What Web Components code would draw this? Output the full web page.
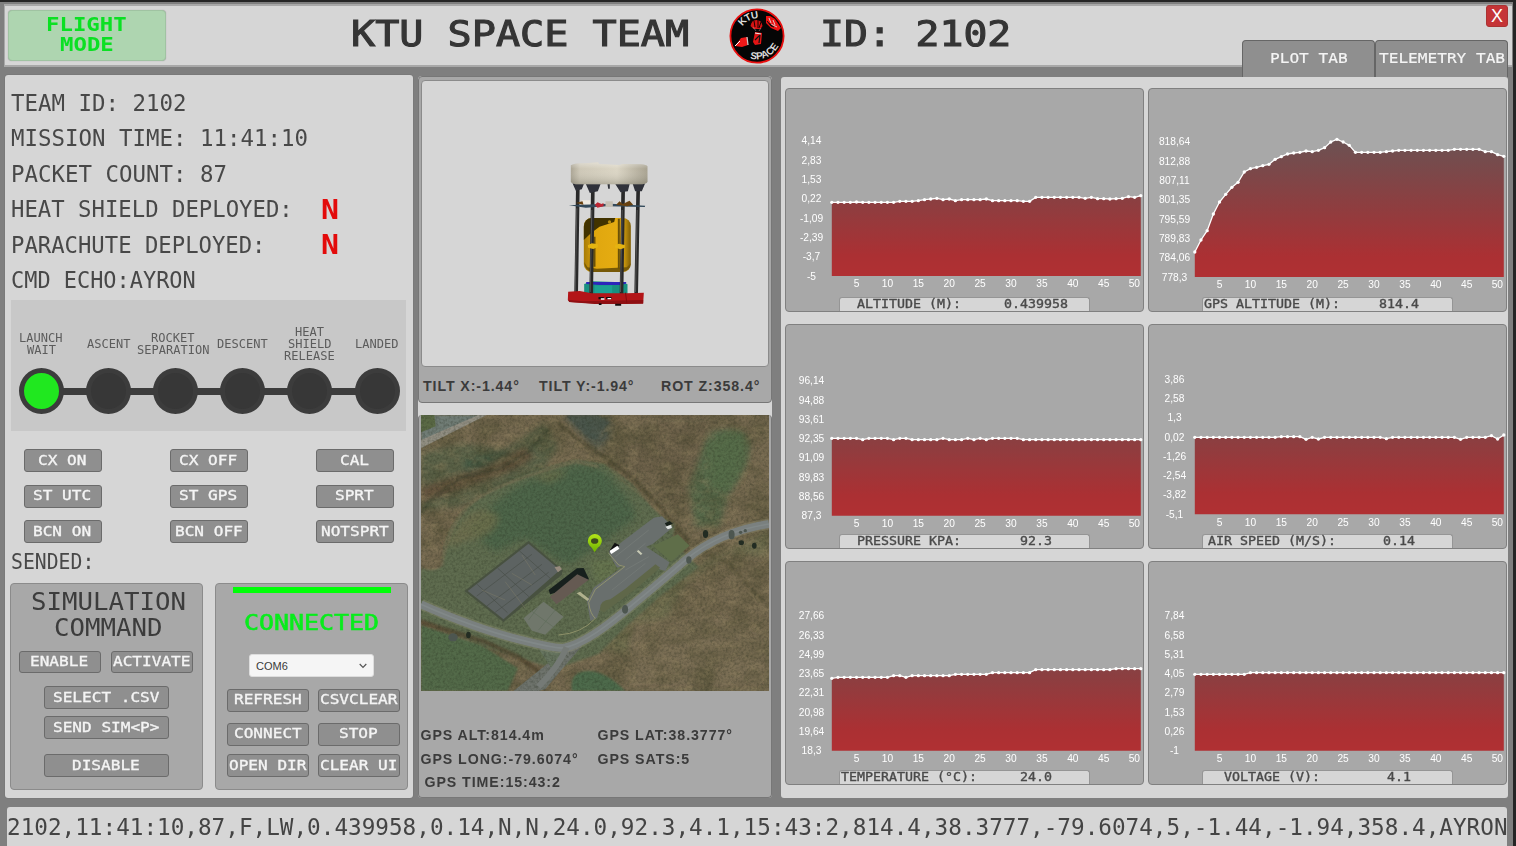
<!DOCTYPE html>
<html lang="en">
<head>
<meta charset="utf-8">
<title>Ground Station</title>
<style>
html,body{margin:0;height:100%;overflow:hidden;background:#7f7f7f}
</style>
</head>
<body>
<ground-station></ground-station>
<script>
const MONO = '"DejaVu Sans Mono","Liberation Mono",monospace';
const SANS = '"Liberation Sans",Arial,sans-serif';
function define(name, html, setup) {
  const t = document.createElement('template');
  t.innerHTML = html;
  customElements.define(name, class extends HTMLElement {
    connectedCallback() {
      if (this.shadowRoot) return;
      const root = this.attachShadow({mode: 'open'});
      root.append(t.content.cloneNode(true));
      if (setup) setup(this, root);
    }
  });
}

/* Terminal text: every character occupies a cell of width `adv` */
define('cell-text', `<style>
:host{display:block;flex:none;white-space:pre;overflow:visible}
span{display:block;width:max-content;transform-origin:0 50%;font-family:${MONO}}
</style><span><slot></slot></span>`, (el, root) => {
  const size = +el.getAttribute('size'), adv = +el.getAttribute('adv');
  el.style.width = el.textContent.length * adv + 'px';
  const s = root.querySelector('span');
  s.style.fontSize = size + 'px';
  s.style.lineHeight = (el.getAttribute('line') || Math.round(size * 1.2)) + 'px';
  s.style.transform = 'scaleX(' + adv / (size * 0.602) + ')';
});

define('cmd-button', `<style>
:host{display:flex;box-sizing:border-box;align-items:center;justify-content:center;height:23px;background:#8f8f8f;border:1px solid #6b6b6b;border-radius:3px;color:#f4f4f4;overflow:hidden}
div{margin:-2px 1px 0 0}
cell-text{-webkit-text-stroke:.35px #f4f4f4}
</style><div></div>`, (el, root) => {
  const c = document.createElement('cell-text');
  c.setAttribute('size', '14.6'); c.setAttribute('adv', '9.68');
  c.textContent = el.getAttribute('label');
  root.querySelector('div').append(c);
});

define('team-logo', `<style>:host{display:block;width:56px;height:56px}svg{display:block}text{font:bold 10px ${SANS};fill:#dcdcdc}</style>
<svg width="56" height="56" viewBox="0 0 56 56">
<defs><path id="a" d="M13.500 18.500A18 18 0 0 1 32 10.500"/><path id="b" d="M21 50.500A25 25 0 0 0 52.500 27"/></defs>
<circle cx="28" cy="28" r="26.6" fill="#050505" stroke="#e90f0f" stroke-width="1.8"/>
<text letter-spacing="-.8"><textPath href="#a">KTU</textPath></text>
<text letter-spacing="0"><textPath href="#b">SPACE</textPath></text>
<path d="M37 8l4 0 5 3 6 9-3 3-7-3-5-5z" fill="#ef1212"/><path d="M40 10l2 5m2-3l2 5m-4-1l6 3" stroke="#ddd" stroke-width=".9"/><path d="M38 13l4 5 3 1" stroke="#111"/>
<path d="M21.500 18q1-6 6-6 5 0 6 6l-2 3h-7z" fill="#d51313"/><path d="M25 13l1 6m3-7v8m3-6l-2 6" stroke="#190000" stroke-width="1"/>
<path d="M24 19l3 4m5-3l-2 3" stroke="#aaa" stroke-width=".5"/>
<path d="M26 24l7 1-1 11-6 1-2-3z" fill="#e41414"/><path d="M26 32l5-5-1 8" fill="none" stroke="#111" stroke-width="1.2"/><path d="M26 25l6 1" stroke="#eee"/>
<path d="M6 38l6-8 6-1 1 8-6 2z" fill="#f01818"/><path d="M6 38l5-5" stroke="#fff" stroke-width="1"/><path d="M18 29l1 8" stroke="#ccc" stroke-width="1.2"/>
</svg>`);

define('top-bar', `<style>
:host{display:flex;box-sizing:border-box;height:63px;border:solid #a8a8a8;border-width:2px 0 2px 1px;background:#d6d6d6;position:relative;color:#353535}
.mode{box-sizing:border-box;width:158px;height:51px;margin:4px 0 0 3px;padding:4px 1px 0 0;background:#aed5b0;border:1px solid #a0c3a2;border-radius:4px;display:flex;flex-direction:column;align-items:center;color:#0be023;font-weight:bold;box-shadow:0 0 1px #999}
.titles{display:flex;align-items:center;margin-left:185px;height:56px;-webkit-text-stroke:1.1px #353535}
team-logo{margin:3px 35.5px 0 39.5px;-webkit-text-stroke:0}
.x{position:absolute;box-sizing:border-box;right:4px;top:-1px;width:22px;height:22px;border-radius:3px;background:#c53437;border:1px solid #a33;color:#fff;font:18px/20px ${SANS};text-align:center}
.tabs{position:absolute;right:4px;top:34px;display:flex}
.tab{box-sizing:border-box;width:133px;height:37px;background:#8f8f8f;border:1px solid #666;border-bottom:0;border-radius:4px 4px 0 0;display:flex;justify-content:center;padding:8px 0 0 1px;color:#f4f4f4}
.tab cell-text{-webkit-text-stroke:.15px #fff}
</style>
<div class="mode"><cell-text size="19.5" adv="13.45" line="20">FLIGHT</cell-text><cell-text size="19.5" adv="13.45" line="20">MODE</cell-text></div>
<div class="titles"><cell-text size="35" adv="24.15">KTU SPACE TEAM</cell-text><team-logo></team-logo><cell-text size="35" adv="23.9">ID: 2102</cell-text></div>
<div class="x">X</div>
<div class="tabs"><div class="tab"><cell-text size="14.6" adv="9.7">PLOT TAB</cell-text></div><div class="tab"><cell-text size="14.6" adv="9.7">TELEMETRY TAB</cell-text></div></div>`);

define('info-line', `<style>:host{display:flex;align-items:center;height:35.5px;position:relative}b{position:absolute;left:310px;top:1px;color:#e30b0b}cell-text{padding-top:1px}</style>
<cell-text size="22.4" adv="13.5"></cell-text><b></b>`, (el, root) => {
  const c = document.createElement('cell-text');
  c.setAttribute('size', '22.4'); c.setAttribute('adv', el.getAttribute('adv') || '13.5');
  c.textContent = el.getAttribute('text');
  root.querySelector('cell-text').replaceWith(c);
  if (el.hasAttribute('flag')) {
    const n = document.createElement('cell-text');
    n.setAttribute('size', '26.5'); n.setAttribute('adv', '18');
    n.textContent = el.getAttribute('flag');
    root.querySelector('b').append(n);
  } else root.querySelector('b').remove();
});

define('phase-step', `<style>
:host{display:flex;flex-direction:column;width:67.2px;flex:none}
.l{height:46px;display:flex;flex-direction:column;align-items:center;justify-content:center;color:#5c5c5c;padding-top:1px;margin:0 2px 0 var(--pull,0);box-sizing:border-box}
.t{height:50px;display:flex;align-items:center;justify-content:center;background:linear-gradient(#3c3c3c,#3c3c3c) center/100% 7px no-repeat}
:host(:not([last])) .t{margin-right:-1px;padding-right:1px}
:host([first]) .t{background-position:100% 50%;background-size:50% 7px}
:host([last]) .t{background-position:0 50%;background-size:50% 7px}
.d{box-sizing:border-box;width:45px;height:46px;border-radius:50%;border:5.5px solid #3c3c3c;background:#373737}
:host([on]) .d{background:#20e81f}
</style><div class="l"></div><div class="t"><div class="d"></div></div>`, (el, root) => {
  for (const w of el.getAttribute('label').split('|')) {
    const c = document.createElement('cell-text');
    c.setAttribute('size', '11.6'); c.setAttribute('adv', '7.25'); c.setAttribute('line', '12');
    c.textContent = w;
    root.querySelector('.l').append(c);
  }
});

define('phase-track', `<style>:host{display:flex;box-sizing:border-box;width:395px;height:131px;padding:20px 0 0;background:#c8c8c8}div{display:flex;margin-left:-3.5px}phase-step{--pull:2px}.wide{--pull:-3px}</style>
<div><phase-step first on label="LAUNCH|WAIT"></phase-step><phase-step label="ASCENT"></phase-step><phase-step label="ROCKET|SEPARATION" class="wide"></phase-step><phase-step label="DESCENT"></phase-step><phase-step label="HEAT|SHIELD|RELEASE"></phase-step><phase-step last label="LANDED"></phase-step></div>`);

define('sim-panel', `<style>
:host{display:flex;flex-direction:column;align-items:center;box-sizing:border-box;width:193px;height:207px;background:#a8a8a8;border:1px solid #8b8b8b;border-radius:4px;color:#3c3c3c;padding-top:5px}
.r{display:flex;gap:10px;margin:10px 1px 13px 0}.r cmd-button{width:82px;height:22px}
.w{width:125px}
.h{margin-left:4px;display:flex;flex-direction:column;align-items:center}
</style><div class="h"><cell-text size="25" adv="15.5" line="26">SIMULATION</cell-text><cell-text size="25" adv="15.5" line="26">COMMAND</cell-text></div>
<div class="r"><cmd-button label="ENABLE"></cmd-button><cmd-button label="ACTIVATE"></cmd-button></div>
<cmd-button class="w" label="SELECT .CSV"></cmd-button>
<cmd-button class="w" style="margin:7px 0 15px" label="SEND SIM&lt;P&gt;"></cmd-button>
<cmd-button class="w" label="DISABLE"></cmd-button>`);

define('port-panel', `<style>
:host{display:flex;flex-direction:column;align-items:center;box-sizing:border-box;width:193px;height:207px;background:#a8a8a8;border:1px solid #8b8b8b;border-radius:4px}
.bar{width:158px;height:6px;background:#00ff08;margin-top:3px}
.c{color:#08ec1c;margin-top:16px;-webkit-text-stroke:.6px #08ec1c}
.s{box-sizing:border-box;width:125px;height:23px;margin-top:17px;background:#f5f5f5;border:1px solid #ddd;border-radius:3px;display:flex;align-items:center;justify-content:space-between;padding:1px 6px 0;font:11px ${SANS};color:#3a3a3a}
.g{display:grid;grid-template-columns:82px 82px;column-gap:9px;grid-template-rows:34px 31.5px 23px;margin:11.5px 0 0 4px}
</style><div class="bar"></div><div class="c"><cell-text size="22" adv="15" line="28">CONNECTED</cell-text></div>
<div class="s"><span>COM6</span><svg width="8" height="6" viewBox="0 0 8 6"><path d="M.7 1L4 4.4 7.3 1" fill="none" stroke="#555" stroke-width="1.2"/></svg></div>
<div class="g"><cmd-button label="REFRESH"></cmd-button><cmd-button label="CSVCLEAR"></cmd-button><cmd-button label="CONNECT"></cmd-button><cmd-button label="STOP"></cmd-button><cmd-button label="OPEN DIR"></cmd-button><cmd-button label="CLEAR UI"></cmd-button></div>`);

define('status-panel', `<style>
:host{display:block;box-sizing:border-box;width:408px;height:723px;background:#d6d6d6;border-radius:3px;padding:10px 5px 0 6px;color:#484848;box-shadow:0 0 1px #555}
.k{display:grid;grid-template-columns:repeat(3,78px);justify-content:space-between;row-gap:12.5px;width:370px;margin:18px 0 0 13px}
.b{display:flex;justify-content:space-between;margin:8px 0 0 -1px}
phase-track{margin-top:2px}
.s{margin-top:6px}
</style>
<info-line text="TEAM ID: 2102"></info-line><info-line text="MISSION TIME: 11:41:10"></info-line><info-line text="PACKET COUNT: 87"></info-line><info-line adv="13.42" text="HEAT SHIELD DEPLOYED:" flag="N"></info-line><info-line adv="13.4" text="PARACHUTE DEPLOYED:" flag="N"></info-line><info-line adv="13.2" text="CMD ECHO:AYRON"></info-line>
<phase-track></phase-track>
<div class="k"><cmd-button label="CX ON"></cmd-button><cmd-button label="CX OFF"></cmd-button><cmd-button label="CAL"></cmd-button><cmd-button label="ST UTC"></cmd-button><cmd-button label="ST GPS"></cmd-button><cmd-button label="SPRT"></cmd-button><cmd-button label="BCN ON"></cmd-button><cmd-button label="BCN OFF"></cmd-button><cmd-button label="NOTSPRT"></cmd-button></div>
<div class="s"><cell-text size="20.5" adv="11.9" line="26">SENDED:</cell-text></div>
<div class="b"><sim-panel></sim-panel><port-panel></port-panel></div>`);

define('can-model', `<style>:host{display:block}svg{display:block}</style>
<svg width="345" height="286" viewBox="0 0 345 286">
<defs><linearGradient id="w" x2="1" y2="0"><stop offset="0" stop-color="#aaa493"/><stop offset=".12" stop-color="#cdc7b6"/><stop offset=".6" stop-color="#dbd5c4"/><stop offset="1" stop-color="#a7a18f"/></linearGradient>
<linearGradient id="w2" x2="0" y2="1"><stop offset="0" stop-color="#fff" stop-opacity=".35"/><stop offset=".3" stop-color="#fff" stop-opacity="0"/><stop offset="1" stop-color="#443" stop-opacity=".25"/></linearGradient>
<linearGradient id="y" x2="1" y2="0"><stop offset="0" stop-color="#a77b06"/><stop offset=".25" stop-color="#e0a70f"/><stop offset=".8" stop-color="#e6ad12"/><stop offset="1" stop-color="#805f05"/></linearGradient></defs>
<g transform="translate(117.500 59) scale(.33333)">
<path d="M134 432l25-8 90 3 15 6v30H134z" fill="#189080"/><path d="M140 426h120v5l-20 4h-60l-40-3z" fill="#2c25bb"/><path d="M165 436h53v24h-53z" fill="#1ca193"/>
<rect x="133" y="234" width="141" height="162" rx="24" fill="url(#y)"/>
<path d="M133 300v-40q2-26 24-26h70l-3 12-44 14-26 20z" fill="#423300"/>
<path d="M134 366q3 28 25 30h90q22-3 25-26l-12 12-90 4-28-4z" fill="#775907"/>
<path d="M165 290v90M238 236v150" stroke="#6b5108" stroke-width="6"/><circle cx="210" cy="246" r="5" fill="#b88d10"/>
<g stroke="#292929" stroke-width="11"><path d="M115 145L110 458M160 150L155 462M251 148L246 462M296 150L290 460"/></g>
<g stroke="#555" stroke-width="3"><path d="M112 205L107 456M157 210L152 456M248 210L243 456M293 210L288 456"/></g>
<path d="M145 316l12-6 18 3v9l-14 5-15-4zM226 316l12-5 18 4v8l-13 5-16-5z" fill="#e5b411"/>
<path d="M88 196l34-2 92-3 103 6-1 4-115-2-62 4z" fill="#334a5b"/><path d="M127 181h25v12h-25z" fill="#eee9df"/><path d="M198 184h22v17h-22z" fill="#c5c0b4"/><path d="M166 194l8-7 12 5 6-3v10l-18 4z" fill="#bd2633"/><path d="M109 189l20-5 3 10zM230 194l10-10 10 8 20-10 11 12-18 5z" fill="#68410f"/>
<path d="M99 130h35l-7 18-18 4zM138 130h46l-9 24-24 5zM226 130h45l-6 24-22 3zM279 130h38l-10 24h-20z" fill="#30323a"/><path d="M204 132h7v14h-5z" fill="#31343a"/>
<path d="M94 76q10-7 42-6l40-3 3 5 60 3 10-3 55 1q17 1 20 6v46q-3 8-26 8H118q-22-1-24-8z" fill="url(#w)"/><path d="M94 76q10-7 42-6l40-3 3 5 60 3 10-3 55 1q17 1 20 6v46q-3 8-26 8H118q-22-1-24-8z" fill="url(#w2)"/>
<path d="M86 455l35-2 35 7h105l52-2-2 32-55 2-80-1-86-5-5-6z" fill="#b31518"/><path d="M86 480l45 4 180-4v11l-145 1-77-6z" fill="#8e0f12"/><path d="M258 458l4 32" stroke="#86090d" stroke-width="3"/><path d="M177 471h16v7h-16zM200 471h16v7h-16zM178 490h8v5h-8zM227 491h18v6h-18z" fill="#140c0d"/><path d="M184 475h11v4h-11zM204 474h11v4h-11z" fill="#fff"/>
</g></svg>`);

define('sat-map', `<style>:host{display:block;width:348px;height:276px}svg{display:block}</style>
<svg width="348" height="276" viewBox="18 165 1042 828" preserveAspectRatio="none">
<defs>
<filter id="f1" x="0" y="0" width="1" height="1" color-interpolation-filters="sRGB"><feTurbulence type="fractalNoise" baseFrequency=".011 .015" numOctaves="6" seed="4"/><feColorMatrix values="0 0 0 0 .27  0 0 0 0 .27  0 0 0 0 .17  2.4 1 0 0 -1.4"/></filter>
<filter id="f2" x="0" y="0" width="1" height="1" color-interpolation-filters="sRGB"><feTurbulence type="fractalNoise" baseFrequency=".03 .045" numOctaves="4" seed="17"/><feColorMatrix values="0 0 0 0 .60  0 0 0 0 .54  0 0 0 0 .40  2 1.4 0 0 -1.5"/></filter>
<filter id="f3" x="0" y="0" width="1" height="1" color-interpolation-filters="sRGB"><feTurbulence type="fractalNoise" baseFrequency=".13" numOctaves="3" seed="9"/><feColorMatrix values="0 0 0 0 .13  0 0 0 0 .15  0 0 0 0 .1  1.6 1 0 0 -1.1"/></filter>
<filter id="s"><feGaussianBlur stdDeviation="9"/></filter><filter id="s2"><feGaussianBlur stdDeviation="2.5"/></filter>
<linearGradient id="p" x2="0" y2="1"><stop offset="0" stop-color="#b4e61a"/><stop offset="1" stop-color="#6db000"/></linearGradient>
</defs>
<rect x="18" y="165" width="1042" height="828" fill="#74684f"/>
<g filter="url(#s)"><path d="M18 280l120-30 130 20 120-80 40 70-60 90-240 90-110 10z" fill="#5b634a"/><path d="M150 300l110-25 90 20-60 45-130 10z" fill="#3f5d49"/><path d="M440 165h140l10 60-40 50-50-50z" fill="#4f574c"/><path d="M600 300l120-135 190 0-90 200-40 80z" fill="#6c6148"/><path d="M18 430l120-40 160-60 60-40-30-30-120 60-190 60z" fill="#64523e"/>
<path d="M880 220q80-30 120 20 10 60-60 160l-30 100h-70l-20-120z" fill="#586a4c"/><path d="M560 870l120-130 180-130 200-100v80l-120-10-130 90-60 120-60 100z" fill="#706e50"/><path d="M620 993l30-200 240-40 170 80v160z" fill="#786c53"/></g>
<rect x="18" y="165" width="1042" height="828" filter="url(#f1)" opacity=".45"/><rect x="18" y="165" width="1042" height="828" filter="url(#f2)" opacity=".35"/>
<path d="M18 165h190L70 232 18 262z" fill="#6f7b74" filter="url(#s2)"/><path d="M18 165h40l4 34-44 18z" fill="#5a6945"/><path d="M18 240L190 165h24L18 264z" fill="#918e82"/>
<path d="M456 165h90l36 22-20 24-22 32-30-20-52-48z" fill="#48544c" filter="url(#s2)" opacity=".8"/>
<g filter="url(#s2)"><path d="M18 625q50 14 62-10 6-110 80-180Q280 345 480 300l90 12 80 60 60 70 30 30 40 20-10 50 80 80-120 90-100 90-80 80-130 45-190-60-230-95z" fill="#5f6c4f"/></g><g filter="url(#s)">
<path d="M240 430q100-90 250-115 80 0 110 60 60 60 60 100l-110 80-90 60-40-20-90-60-90 40-90-70z" fill="#4e6549"/>
<path d="M150 470q60-40 100 0-10 60-90 70-60 30-70 10z" fill="#74704f" opacity=".7"/><path d="M350 350q60-30 110-10l-60 30z" fill="#6b6c4b" opacity=".7"/><path d="M520 600l80 0 20 30-70 50z" fill="#66744f"/></g><g filter="url(#s2)">
<path d="M18 795l180 60 110 70-30 68H18z" fill="#526a4a"/><path d="M470 993q-10-60 50-60 50 0 110 60z" fill="#4e6b4c"/></g><g filter="url(#s)"><path d="M870 260q60-60 110-40 40 70-40 170-50 20-60-30z" fill="#566c4a"/></g>
<path d="M430 190l60 50 90 60 80 60 80 90 80 95" fill="none" stroke="#48452f" stroke-width="9" opacity=".65" stroke-dasharray="30 5 50 8" filter="url(#s2)"/><path d="M480 250l80 50 60 60 100 80 60 60" fill="none" stroke="#7d7053" stroke-width="5" opacity=".6" filter="url(#s2)"/>
<path d="M80 620q20-130 90-190T480 305l70 15" fill="none" stroke="#807156" stroke-width="5" opacity=".8" filter="url(#s2)"/>
<path d="M18 458l40-50 80-55 110-25 90-50 60-70" fill="none" stroke="#353d2c" stroke-width="9" opacity=".4" filter="url(#s2)"/>
<path d="M18 785l190 60 100 45 70 50" fill="none" stroke="#51452f" stroke-width="14" opacity=".7" filter="url(#s2)"/>
<path d="M850 570l90 40 60 70 60 60" fill="none" stroke="#3f3f28" stroke-width="10" opacity=".4" stroke-dasharray="25 8" filter="url(#s2)"/>
<path d="M295 993l155-125 50-10-60 70-50 60-20 5z" fill="#6e736c"/><path d="M370 866l90 0-50 60z" fill="#66745f"/>
<rect x="18" y="165" width="1042" height="828" filter="url(#f3)" opacity=".32"/>
<path d="M18 733Q180 805 310 838T450 862Q510 850 620 760T810 600Q910 515 1060 492" fill="none" stroke="#a39e84" stroke-width="33" opacity=".3"/>
<path d="M18 733Q180 805 310 838T450 862Q510 850 620 760T810 600Q910 515 1060 492" fill="none" stroke="#7a807f" stroke-width="24"/>
<path d="M18 733Q180 805 310 838T450 862Q510 850 620 760T810 600Q910 515 1060 492" fill="none" stroke="#858b8c" stroke-width="5" opacity=".7"/>
<path d="M454 862Q430 920 370 980" fill="none" stroke="#757a76" stroke-width="18"/>
<path d="M148 693L340 543 442 630 440 644 265 786z" fill="#485140"/><path d="M158 693L340 551 434 630 265 778z" fill="#5d6362"/>
<path d="M185 672l92 86M247 624l94 86M312 572l94 84M185 708l165-125M215 738l165-125M240 757l160-120" stroke="#484f49" stroke-width="2" fill="none"/><path d="M200 690l70 30m20-80l60 35m-30-90l40 60m-90 20l60 80" stroke="#7c7b68" stroke-width="1.5"/>
<path d="M325 775l60-50 60 45-55 54-40-12z" fill="#70776b"/><path d="M345 750l75 55m-50-65l-30 40m80-30l-50 60" stroke="#5f6c5a" stroke-width="2"/>
<path d="M580 580l40-35 95-72 25-4 32 33-60 50-20 8 70 47-12 26-35-10-60 50-70 55-30 15-10 30-20 10-10-60 20-40 90-65-20 5z" fill="#696f6d"/>
<path d="M555 752q-5-30 30-34l45-32 90-73 14 10-78 68-90 66z" fill="#5f6749"/><path d="M580 580l30 35 18 5-88 68-20 40q5 35 20 47-40 45-110 50" fill="none" stroke="#97996f" stroke-width="2.500"/><path d="M712 557l75-34 35 34-55 48z" fill="#5f6e49"/>
<path d="M600 590l100-80m-70 90l60-50m-60 80l70-40m-110 100l100-80" stroke="#7c827e" stroke-width="1.5"/>
<path d="M400 690l85-65 20-1 16 34-12 5-88 35-16 5z" fill="#17201d"/><path d="M404 710l82-67 34 16-96 74z" fill="#655a52"/><path d="M484 700l10-5 28 22-6 6z" fill="#b0b18d"/><path d="M418 622l15-4 7 10-12 9z" fill="#978b7e"/>
<path d="M580 576l18-28 14 8-20 20z" fill="#111"/><path d="M582 573l24-16 6 9-24 16z" fill="#fff"/><path d="M748 490l15-7 9 8-18 8z" fill="#172019"/><path d="M750 500l17-6 2 10-12 4z" fill="#dfe3e0"/><path d="M664 574l5-4 12 11-5 4z" fill="#c8cab5"/>
<g fill="#222c22"><ellipse cx="870" cy="522" rx="8" ry="12"/><ellipse cx="160" cy="825" rx="7" ry="10"/><ellipse cx="977" cy="548" rx="8" ry="7"/><ellipse cx="1016" cy="557" rx="7" ry="9"/></g><g fill="#4d5650"><ellipse cx="948" cy="524" rx="9" ry="14"/><ellipse cx="820" cy="600" rx="8" ry="11"/><ellipse cx="629" cy="748" rx="9" ry="13"/><ellipse cx="114" cy="832" rx="14" ry="12"/><circle cx="975" cy="517" r="5"/><circle cx="989" cy="512" r="5"/></g>
<path d="M538 577q-6-14-15-20a21 21 0 1 1 31 0q-10 6-16 20z" fill="url(#p)"/><ellipse cx="538" cy="543" rx="11" ry="8.5" fill="#3e4b1d"/>
</svg>`);

define('view-panel', `<style>
:host{display:flex;flex-direction:column;width:354px;height:722px;margin-top:1px;background:#d6d6d6;border-radius:4px;color:#3b3b3b;font:bold 14.2px/16px ${SANS}}
.c{box-sizing:border-box;border:1px solid #777;border-radius:4px;background:#a8a8a8}
.a{height:327px;padding:3px 0 0 2px}
.m{box-sizing:border-box;width:348px;height:287px;background:#d6d6d6;border:1px solid #8b8b8b;border-radius:4px;overflow:hidden}
.t{display:flex;margin-top:10.5px;padding-left:2px;letter-spacing:.9px;white-space:nowrap}
.b{height:383px;margin-top:12px;padding-left:1.5px;border-top:0}
.g{display:grid;grid-template-columns:177px 1fr;grid-auto-rows:23.7px;margin:36px 0 0 0;letter-spacing:.93px;white-space:nowrap}
</style>
<div class="c a"><div class="m"><can-model></can-model></div><div class="t"><span style="width:116px">TILT X:-1.44°</span><span style="width:122px">TILT Y:-1.94°</span><span>ROT Z:358.4°</span></div></div>
<div class="c b"><sat-map></sat-map><div class="g"><span>GPS ALT:814.4m</span><span>GPS LAT:38.3777°</span><span>GPS LONG:-79.6074°</span><span>GPS SATS:5</span><span style="padding-left:4px">GPS TIME:15:43:2</span></div></div>`);

define('plot-card', `<style>
:host{display:flex;flex-direction:column;justify-content:space-between;box-sizing:border-box;width:359px;height:224.5px;background:#a8a8a8;border:1px solid #808080;border-radius:4px;color:#4a4a4a}
svg{display:block;flex:none;overflow:visible}
text{font:10.2px ${SANS};fill:#fff;text-anchor:middle}
.v{box-sizing:border-box;display:grid;grid-template-columns:138px 115px;width:251px;height:14px;margin-left:53px;background:#d6d6d6;border:1px solid #959595;border-bottom:0;border-radius:3px 3px 0 0;justify-items:center;-webkit-text-stroke:.35px #4a4a4a}
</style><svg width="357" height="205"><defs><linearGradient id="g" gradientUnits="userSpaceOnUse"><stop offset="0" stop-color="#6b5253"/><stop offset=".45" stop-color="#8b3f41"/><stop offset=".85" stop-color="#ab3033"/><stop offset="1" stop-color="#b03033"/></linearGradient></defs></svg><div class="v"></div>`, (el, root) => {
  const base = +el.getAttribute('base') - 1, shift = +el.getAttribute('shift') - 1;
  const ys = [];
  for (const tok of el.getAttribute('trace').split(' ')) {
    const [v, n] = tok.split('x');
    for (let i = 0; i < (+n || 1); i++) ys.push(+v / 3 + shift);
  }
  const px = i => 45.8 + i * 6.18;
  const line = ys.map((y, i) => px(i).toFixed(2) + ',' + y.toFixed(2)).join(' ');
  const g = root.querySelector('linearGradient');
  g.setAttribute('x1', 0); g.setAttribute('x2', 0); g.setAttribute('y1', base - 138); g.setAttribute('y2', base);
  let s = `<polygon points="${px(0)},${base} ${line} ${px(50)},${base}" fill="url(#g)"/><polyline points="${line}" fill="none" stroke="#fff" stroke-width="1.3"/>`;
  ys.forEach((y, i) => s += `<circle cx="${px(i)}" cy="${y}" r="1.65" fill="#fff"/>`);
  el.getAttribute('ticks').split(' ').forEach((t, i) => s += `<text x="25.5" y="${base - 131.6 + i * 19.3}">${t}</text>`);
  for (let i = 1; i <= 10; i++) s += `<text x="${px(i * 5 - 1) + (i == 10 ? -.3 : 0)}" y="${base + 11.3}">${i * 5}</text>`;
  root.querySelector('svg').insertAdjacentHTML('beforeend', s);
  for (const k of ['name', 'value']) {
    const c = document.createElement('cell-text');
    c.setAttribute('size', '11.8'); c.setAttribute('adv', '8'); c.setAttribute('line', '13');
    c.textContent = el.getAttribute(k);
    root.querySelector('.v').append(c);
  }
});

define('plot-panel', `<style>
:host{display:grid;box-sizing:border-box;grid-template-columns:359px 359px;grid-template-rows:repeat(3,224.5px);gap:12.2px 4px;width:727px;height:721px;margin-top:2px;padding:10.5px 0 0 4px;background:#d6d6d6;border-radius:3px}
</style>
<plot-card name="ALTITUDE (M):" value="0.439958" base="188" shift="-13" ticks="4,14 2,83 1,53 0,22 -1,09 -2,39 -3,7 -5" trace="382x4 381 382x6 379x3 377 374 372 370 374 372 377 374x4 372 377x5 379x2 367x8 370 367 371x2 372 371 370 365 367 362"></plot-card>
<plot-card name="GPS ALTITUDE (M):" value="814.4" base="189" shift="-13" ticks="818,64 812,88 807,11 801,35 795,59 789,83 784,06 778,3" trace="531 495 467 417 381 358 337 322 291 281 277 272 268 253 245 237 234 232 228 230 226 218 201 193 201 211 232x5 230 228 226x9 223x5 230x2 239 244"></plot-card>
<plot-card name="PRESSURE KPA:" value="92.3" base="191.8" shift="101" ticks="96,14 94,88 93,61 92,35 91,09 89,83 88,56 87,3" trace="40x5 44 40x4 44 40x2 44x5 40 44x3 40 44 40 44 40x5 44x20"></plot-card>
<plot-card name="AIR SPEED (M/S):" value="0.14" base="190.2" shift="101" ticks="3,86 2,58 1,3 0,02 -1,26 -2,54 -3,82 -5,1" trace="37x14 35x4 43 37 42 37x10 41 37x11 43 37x4 32 42 30"></plot-card>
<plot-card name="TEMPERATURE (°C):" value="24.0" base="189.8" shift="94" ticks="27,66 26,33 24,99 23,65 22,31 20,98 19,64 18,3" trace="70 67x9 62x2 67 62x7 58x6 53x7 44x13 41x5"></plot-card>
<plot-card name="VOLTAGE (V):" value="4.1" base="189.8" shift="94" ticks="7,84 6,58 5,31 4,05 2,79 1,53 0,26 -1" trace="58x9 53x42"></plot-card>`);

define('packet-bar', `<style>:host{display:flex;align-items:center;box-sizing:border-box;width:1500px;height:39px;margin:9px 0 0 6.5px;background:#d6d6d6;border-radius:3px 3px 0 0;color:#444;overflow:hidden}</style>
<cell-text size="23" adv="13.64">2102,11:41:10,87,F,LW,0.439958,0.14,N,N,24.0,92.3,4.1,15:43:2,814.4,38.3777,-79.6074,5,-1.44,-1.94,358.4,AYRON</cell-text>`);

define('ground-station', `<style>
:host{display:block;box-sizing:border-box;width:1516px;height:846px;background:#7f7f7f;border-top:2px solid #262626;border-right:3px solid #252525;padding-top:2px;overflow:hidden}
top-bar{margin:0 1px 0 4px}
.m{display:flex;align-items:flex-start;margin:8px 0 0 5px;height:723px}
view-panel{margin-left:5px}plot-panel{margin-left:9px}
</style>
<top-bar></top-bar>
<div class="m"><status-panel></status-panel><view-panel></view-panel><plot-panel></plot-panel></div>
<packet-bar></packet-bar>`);
</script>
</body>
</html>
